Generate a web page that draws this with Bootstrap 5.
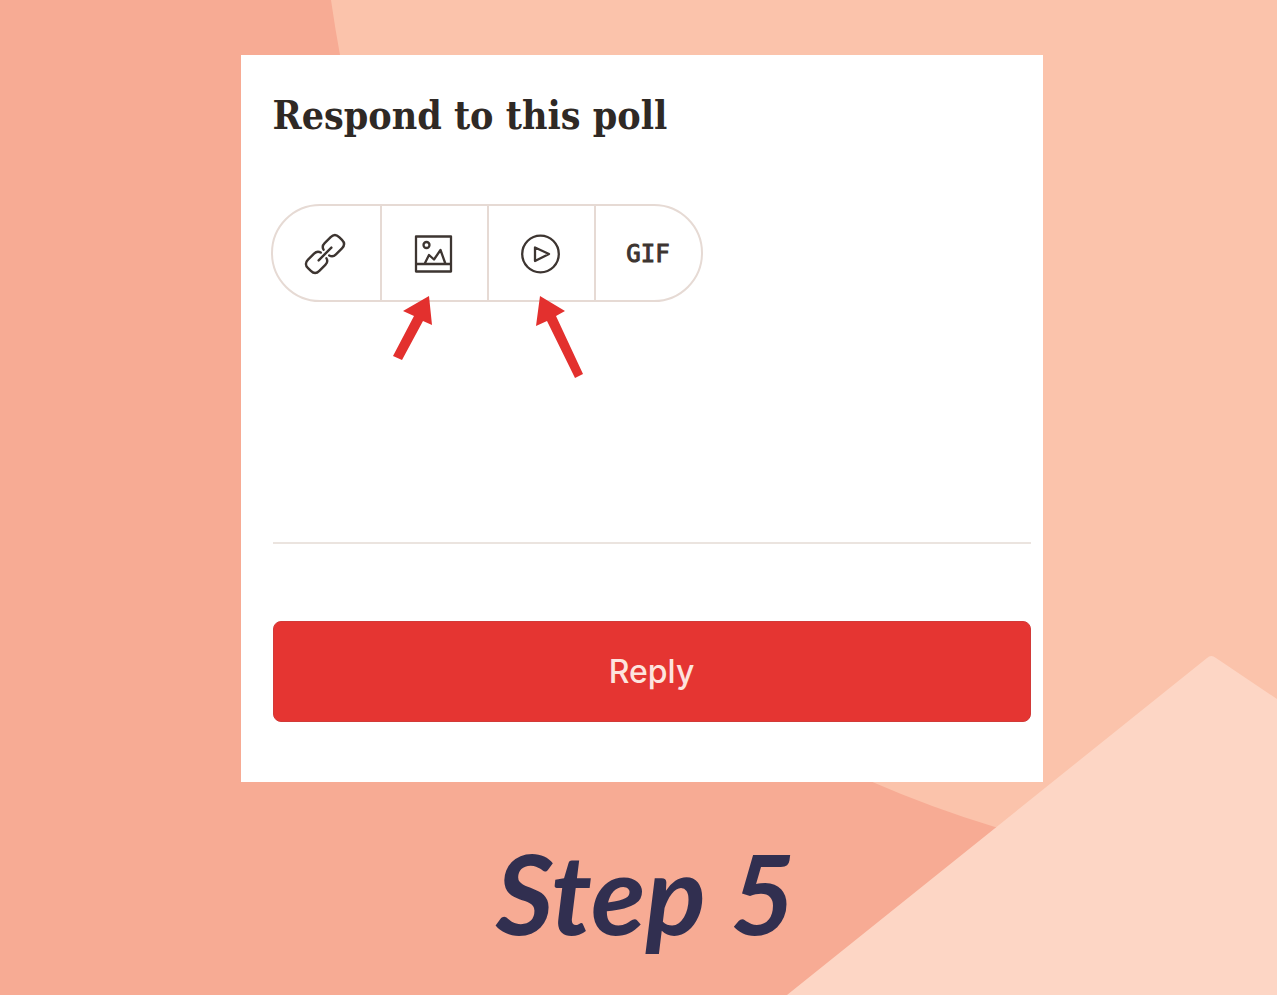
<!DOCTYPE html>
<html lang="en">
<head>
<meta charset="utf-8">
<meta name="viewport" content="width=device-width, initial-scale=1">
<title>Respond to this poll</title>
<link href="https://cdn.jsdelivr.net/npm/bootstrap@5.3.0/dist/css/bootstrap.min.css" rel="stylesheet">
<style>
  body { background: #f7ab94; color: #2f2925; }
  .backdrop { z-index: -1; }
  .stage { padding: 55px 6px 0 12px; }
  .poll { max-width: 802px; padding: 32px 12px 60px 30px; }
  .poll-title { font: 700 39px/56px "DejaVu Serif Condensed", "DejaVu Serif", serif; margin: 0 0 61px 2px; }
  .tools { width: 432px; max-width: 100%; height: 98px; border: 2px solid #e6dad4; border-radius: 49px; }
  .tool { border: 0; border-radius: 0; color: #3d3531; padding: 2px 0 0; }
  .tool + .tool { border-left: 2px solid #e6dad4; }
  .tool svg { width: 40px; height: 40px; overflow: visible; }
  .gif { font: 400 24px/32px "DejaVu Sans Mono", monospace; -webkit-text-stroke: 1px currentColor; }
  .pointer { top: 91px; left: 120px; width: 196px; height: 88px; pointer-events: none; }
  .rows { margin-left: 2px; }
  .answer { height: 242px; resize: none; border: 0; border-bottom: 2px solid #ebe4df; border-radius: 0; }
  .reply { height: 101px; margin-top: 77px; border-radius: 8px; background: #e53532; color: #fde4de; border: 1px solid #d23a38; font: 500 32px/40px Inter, sans-serif; }
  .reply:hover { background: #cf2d2a; color: #fff; }
  .step { font: italic 700 112px/144px Lato, sans-serif; color: #312f50; margin: 38px 0 0 8px; }
</style>
</head>
<body class="min-vh-100 position-relative overflow-x-hidden">
<svg class="backdrop position-absolute top-0 start-0 w-100 h-100" viewBox="0 0 1277 995" preserveAspectRatio="none" aria-hidden="true">
  <path fill="#fbc3ab" d="M331 0Q335 28 340 55C395 370 590 660 870 781Q932 808 995 827L1277 860V0Z"/>
  <path fill="#fdd6c5" d="M787 995 1207 658Q1211 654 1216 658L1277 699V995Z"/>
</svg>
<main class="stage">
  <form class="poll bg-white mx-auto" onsubmit="return false">
    <h1 class="poll-title"><label for="answer">Respond to this poll</label></h1>
    <div class="position-relative">
      <div class="tools d-flex overflow-hidden" role="group" aria-label="Attach">
        <button type="button" class="tool btn flex-fill w-25" aria-label="Link">
          <svg viewBox="0 0 40 40" fill="none" stroke="currentColor" stroke-width="2.4" stroke-linecap="round" stroke-linejoin="round">
            <g transform="translate(-1 0) rotate(-45 20 20)">
              <path d="M18 16Q17 12 12.500 12H4Q-2 12-2 18V22Q-2 28 4 28H12.500Q17 28 18 24"/>
              <path d="M22 16Q23 12 27.500 12H36Q42 12 42 18V22Q42 28 36 28H27.500Q23 28 22 24"/>
              <path d="M11 20H29"/>
            </g>
          </svg>
        </button>
        <button type="button" class="tool btn flex-fill w-25" aria-label="Image">
          <svg viewBox="0 0 40 40" fill="none" stroke="currentColor" stroke-width="2.3" stroke-linejoin="round">
            <rect x="2" y="2.500" width="35" height="35"/>
            <path d="M2.500 30H36.500M10.500 30 15 21 20 25.500 26.500 16 31.500 30"/>
            <circle cx="12.500" cy="11" r="3"/>
          </svg>
        </button>
        <button type="button" class="tool btn flex-fill w-25" aria-label="Video">
          <svg viewBox="0 0 40 40" fill="none" stroke="currentColor" stroke-width="2.3" stroke-linejoin="round">
            <circle cx="19.500" cy="20" r="18.300"/>
            <path d="M14 13.500V27L28 20Z"/>
          </svg>
        </button>
        <button type="button" class="tool gif btn flex-fill w-25">GIF</button>
      </div>
      <svg class="pointer position-absolute" viewBox="0 0 196 88" fill="#e3302e" aria-hidden="true">
        <path d="M38 1 41 30 32 26 11 65 2 61 23 21 12 16Z"/>
        <path d="M149 1 174 16 165 21 192 79 184 83 156 26 145 31Z"/>
      </svg>
      <div class="rows">
        <textarea id="answer" class="answer form-control shadow-none d-block"></textarea>
        <button type="submit" class="reply btn w-100 d-block">Reply</button>
      </div>
    </div>
  </form>
  <h2 class="step text-center">Step 5</h2>
</main>
<script src="https://cdn.jsdelivr.net/npm/bootstrap@5.3.0/dist/js/bootstrap.bundle.min.js"></script>
</body>
</html>
